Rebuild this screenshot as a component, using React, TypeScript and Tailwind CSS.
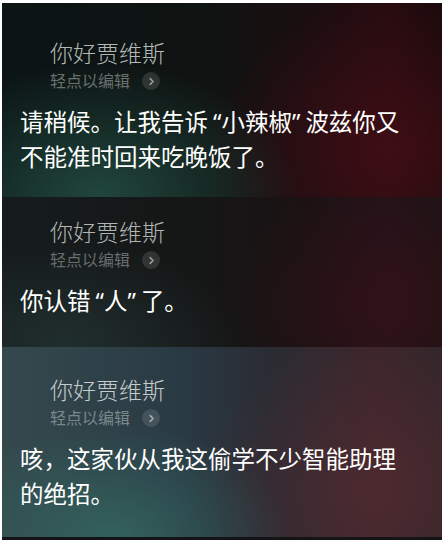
const CJK = "font-['Noto_Sans','Noto_Sans_CJK_SC',sans-serif]"

function Chevron() {
  return (
    <span className="grid h-[18px] w-[18px] place-items-center rounded-full bg-white/[0.12]">
      <svg viewBox="0 0 10 10" className="h-[9px] w-[9px]" fill="none">
        <path d="M3.5 1.8 L6.8 5 L3.5 8.2" stroke="rgba(255,255,255,0.55)" strokeWidth="1.6" strokeLinecap="round" strokeLinejoin="round" />
      </svg>
    </span>
  )
}

// quotes sit on the inner side of a wider cell, like the iOS rendering
function Quoted({ text }: { text: string }) {
  return (
    <>
      {text.split(/([“”])/).map((part, i) =>
        part === '“' ? (
          <span key={i} className="ml-[5px]">“</span>
        ) : part === '”' ? (
          <span key={i} className="mr-[5px]">”</span>
        ) : (
          part
        ),
      )}
    </>
  )
}

function Card({
  bg,
  pt,
  h,
  title,
  sub,
  lines,
}: {
  bg: string
  pt: string
  h: string
  title: string
  sub: string
  lines: string[]
}) {
  return (
    <section className={`${bg} ${pt} ${h} flex flex-col`}>
      <div className={`pl-[48px] text-[23px] leading-[30px] font-light ${title}`}>你好贾维斯</div>
      <div className="mt-[3px] flex items-center gap-[12px] pl-[48px]">
        <span className={`text-[16px] leading-[20px] ${sub}`}>轻点以编辑</span>
        <Chevron />
      </div>
      <div className="mt-[14px] pl-[18px] text-[23.5px] leading-[35px] font-normal text-white">
        {lines.map((l) => (
          <p key={l} className="whitespace-nowrap">
            <Quoted text={l} />
          </p>
        ))}
      </div>
    </section>
  )
}

export default function App() {
  return (
    <div className={`${CJK} h-[540px] w-[446px] overflow-hidden bg-white pt-[3px] pr-[4px] pl-[2px]`}>
      <div className="flex flex-col">
        <Card
          bg="bg-[radial-gradient(ellipse_45%_70%_at_22%_100%,rgba(40,92,78,0.7),transparent),radial-gradient(ellipse_40%_80%_at_88%_75%,rgba(70,14,22,0.75),transparent),linear-gradient(to_right,#0b1514,#0f1312_45%,#1a0e10_70%,#260c10_88%,#1a0a0c)]"
          pt="pt-[35px]"
          h="h-[194px]"
          title="text-[#b4b9b8]"
          sub="text-[#6a706e]"
          lines={['请稍候。让我告诉“小辣椒”波兹你又', '不能准时回来吃晚饭了。']}
        />
        <Card
          bg="bg-[radial-gradient(ellipse_40%_70%_at_15%_100%,rgba(40,60,60,0.6),transparent),radial-gradient(ellipse_35%_90%_at_88%_70%,rgba(56,18,24,0.65),transparent),linear-gradient(to_right,#161c1c,#151616_45%,#1b1213_70%,#22121a_88%,#1c1214)]"
          pt="pt-[20px]"
          h="h-[150px]"
          title="text-[#b0b5b4]"
          sub="text-[#676d6c]"
          lines={['你认错“人”了。']}
        />
        <Card
          bg="bg-[radial-gradient(ellipse_40%_60%_at_25%_100%,rgba(52,108,100,0.75),transparent),radial-gradient(ellipse_40%_80%_at_85%_75%,rgba(88,44,50,0.6),transparent),linear-gradient(to_right,#34494d,#2a3a44_40%,#2a2c34_60%,#3c262b_85%,#33262a)]"
          pt="pt-[28px]"
          h="h-[190px]"
          title="text-[#c3cbcb]"
          sub="text-[#7a888a]"
          lines={['咳，这家伙从我这偷学不少智能助理', '的绝招。']}
        />
        <div className="h-[3px] bg-[#141416]" />
      </div>
    </div>
  )
}
